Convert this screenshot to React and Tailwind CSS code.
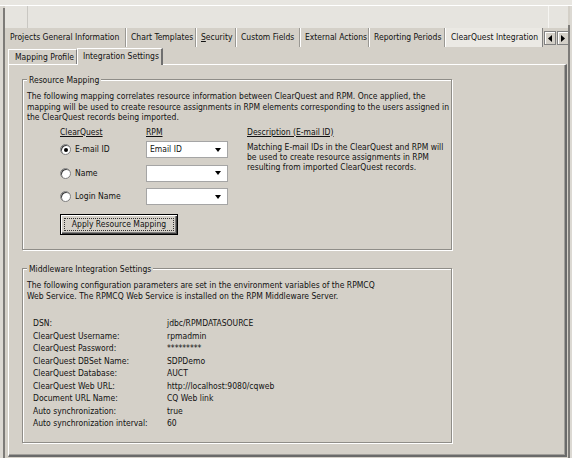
import React from "react";

function Tab({ children, sel, w, pl = "pl-[5px]" }) {
  return (
    <div
      className={
        "h-full flex items-center whitespace-nowrap shrink-0 " +
        w +
        " " +
        pl +
        " " +
        (sel
          ? "bg-[#ebe9e4] border-l border-white border-r border-r-[#808080]"
          : "border-r border-r-[#9a9893] shadow-[1px_0_0_#fff]")
      }
    >
      {children}
    </div>
  );
}

function Radio({ checked, label }) {
  return (
    <div className="flex items-center gap-[4px] h-[17px]">
      <div className="w-[11px] h-[11px] rounded-full bg-white border border-[#808080] shadow-[inset_1px_1px_0_#404040] flex items-center justify-center">
        {checked && <div className="w-[4px] h-[4px] rounded-full bg-black" />}
      </div>
      <span>{label}</span>
    </div>
  );
}

function Select({ value }) {
  return (
    <div className="w-[82px] h-[17px] bg-white border border-[#a5a5a5] flex items-center justify-between pl-[3px] pr-[6px]">
      <span>{value}</span>
      <svg width="6" height="4" viewBox="0 0 6 4">
        <path d="M0 0h6L3 4z" fill="#000" />
      </svg>
    </div>
  );
}

function GroupBox({ title, className, children }) {
  return (
    <div
      className={
        "relative border border-[#8f8d88] shadow-[inset_1px_1px_0_#fff,1px_1px_0_#fff] " +
        className
      }
    >
      <div className="absolute left-[4px] top-[-6px] bg-[#d4d0c8] px-[2px] leading-[12px]">
        {title}
      </div>
      {children}
    </div>
  );
}

export default function App() {
  const rows = [
    ["DSN:", "jdbc/RPMDATASOURCE"],
    ["ClearQuest Username:", "rpmadmin"],
    ["ClearQuest Password:", "*********"],
    ["ClearQuest DBSet Name:", "SDPDemo"],
    ["ClearQuest Database:", "AUCT"],
    ["ClearQuest Web URL:", "http://localhost:9080/cqweb"],
    ["Document URL Name:", "CQ Web link"],
    ["Auto synchronization:", "true"],
    ["Auto synchronization interval:", "60"],
  ];
  return (
    <div className="w-[572px] h-[458px] bg-[#d4d0c8] overflow-hidden flex flex-col text-[8.5px] leading-[10.5px] text-[#111] font-['DejaVu_Sans_Condensed','Liberation_Sans',sans-serif]">
      <div className="h-[5px] bg-[#e8e6e1] shrink-0" />
      <div className="h-px bg-white shrink-0" />
      <div className="flex flex-1 min-h-0">
        <div className="w-[3px] bg-[#dcd9d3] shrink-0" />
        <div className="w-[2px] bg-[#7d7b78] mt-[2px] shrink-0" />
        <div className="flex-1 flex flex-col min-w-0">
          {/* toolbar area */}
          <div className="h-[22px] bg-[#e6e4df] flex shrink-0">
            <div className="w-[22px]" />
            <div className="w-px bg-[#c9c7c2]" />
            <div className="flex-1" />
            <div className="w-px bg-[#f6f5f2] mr-[19px]" />
          </div>
          {/* top tab row */}
          <div className="h-[19px] flex items-stretch shrink-0 pl-[3px]">
            <Tab w="w-[118px]" pl="pl-[2px]">Projects General Information</Tab>
            <Tab w="w-[70px]">Chart Templates</Tab>
            <Tab w="w-[40px]">
              <span className="underline">S</span>ecurity
            </Tab>
            <Tab w="w-[64px]">Custom Fields</Tab>
            <Tab w="w-[69px]">External Actions</Tab>
            <Tab w="w-[76px]">Reporting Periods</Tab>
            <Tab sel w="w-[98px]">ClearQuest Integration</Tab>
            <div className="flex items-center gap-px pl-px pt-[1px]">
              <div className="w-[12px] h-[14px] border border-[#808080] shadow-[inset_1px_1px_0_#fff] flex items-center justify-center">
                <svg width="4" height="7" viewBox="0 0 4 7">
                  <path d="M4 0v7L0 3.5z" fill="#000" />
                </svg>
              </div>
              <div className="w-[12px] h-[14px] border border-[#808080] shadow-[inset_1px_1px_0_#fff] flex items-center justify-center">
                <svg width="4" height="7" viewBox="0 0 4 7">
                  <path d="M0 0v7l4-3.5z" fill="#000" />
                </svg>
              </div>
            </div>
          </div>
          {/* inner tab row */}
          <div className="h-[17px] flex items-end shrink-0 pl-[3px]">
            <div className="w-[69px] h-[15px] flex items-center pl-[6px] border-l border-t border-white border-r border-r-[#808080] whitespace-nowrap">
              Mapping Profile
            </div>
            <div className="w-[86px] h-[17px] flex items-center pl-[5px] pb-[2px] border-l border-t border-white border-r-2 border-r-[#6f6f6f] bg-[#d4d0c8] relative top-px whitespace-nowrap">
              Integration Settings
            </div>
          </div>
          {/* panel */}
          <div className="flex-1 ml-[3px] mr-px mb-[1px] border-t border-l border-white border-r-2 border-b-2 border-r-[#6a6a6a] border-b-[#6a6a6a] shadow-[inset_-1px_-1px_0_#a09e99] pl-[13px] pt-[14px]">
            <GroupBox title="Resource Mapping" className="w-[430px] h-[171px]">
              <div className="pt-[11px] pl-[4px] whitespace-nowrap">
                <div>The following mapping correlates resource information between ClearQuest and RPM. Once applied, the</div>
                <div>mapping will be used to create resource assignments in RPM elements corresponding to the users assigned in</div>
                <div>the ClearQuest records being imported.</div>
              </div>
              <div className="flex pl-[37px] mt-[4px]">
                <div className="w-[86px] shrink-0 flex flex-col">
                  <div className="underline">ClearQuest</div>
                  <div className="flex flex-col gap-[6.5px] mt-[4px]">
                    <Radio checked label="E-mail ID" />
                    <Radio label="Name" />
                    <Radio label="Login Name" />
                  </div>
                </div>
                <div className="w-[101px] shrink-0 flex flex-col">
                  <div className="underline">RPM</div>
                  <div className="flex flex-col gap-[6.5px] mt-[4px]">
                    <Select value="Email ID" />
                    <Select value="" />
                    <Select value="" />
                  </div>
                </div>
                <div className="flex-1 flex flex-col">
                  <div className="underline">Description (E-mail ID)</div>
                  <div className="mt-[5px] leading-[10px] whitespace-nowrap">
                    <div>Matching E-mail IDs in the ClearQuest and RPM will</div>
                    <div>be used to create resource assignments in RPM</div>
                    <div>resulting from imported ClearQuest records.</div>
                  </div>
                </div>
              </div>
              <div className="pl-[37px] mt-[9px]">
                <div className="w-[118px] h-[21px] border border-black bg-[#d4d0c8] shadow-[inset_1px_1px_0_#fff,inset_-1px_-1px_0_#404040,inset_-2px_-2px_0_#808080] p-[3px]">
                  <div className="h-full border border-dotted border-[#333] flex items-center justify-center whitespace-nowrap">
                    Apply Resource Mapping
                  </div>
                </div>
              </div>
            </GroupBox>
            <GroupBox title="Middleware Integration Settings" className="w-[430px] h-[175px] mt-[18px]">
              <div className="pt-[11px] pl-[4px] whitespace-nowrap">
                <div>The following configuration parameters are set in the environment variables of the RPMCQ</div>
                <div>Web Service. The RPMCQ Web Service is installed on the RPM Middleware Server.</div>
              </div>
              <div className="mt-[16px] pl-[10px] leading-[12.5px] whitespace-nowrap">
                {rows.map(([k, v]) => (
                  <div key={k} className="flex">
                    <div className="w-[134px]">{k}</div>
                    <div>{v}</div>
                  </div>
                ))}
              </div>
            </GroupBox>
          </div>
        </div>
        <div className="w-[2px] bg-[#7d7b78] mt-[19px] shrink-0" />
        <div className="w-[2px] bg-[#dcd9d3] shrink-0" />
      </div>
    </div>
  );
}
